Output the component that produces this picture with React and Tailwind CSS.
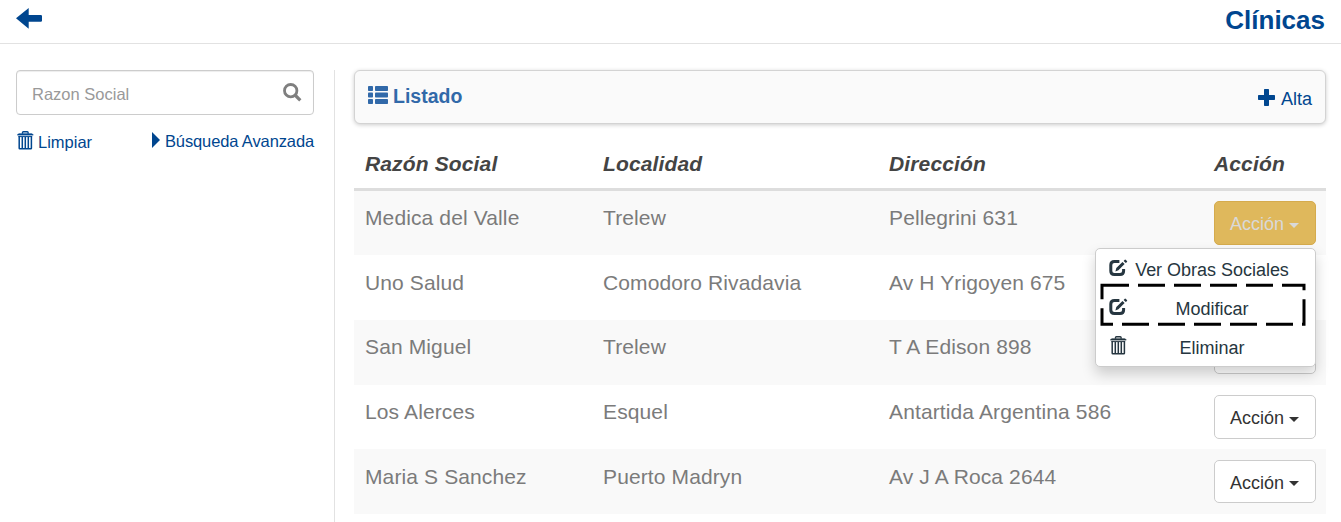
const rows = [
  ["Medica del Valle", "Trelew", "Pellegrini 631"],
  ["Uno Salud", "Comodoro Rivadavia", "Av H Yrigoyen 675"],
  ["San Miguel", "Trelew", "T A Edison 898"],
  ["Los Alerces", "Esquel", "Antartida Argentina 586"],
  ["Maria S Sanchez", "Puerto Madryn", "Av J A Roca 2644"],
];

const GRID = "grid grid-cols-[238px_286px_325px_123px]";

function Trash({ className }) {
  return (
    <svg className={className} width="17" height="19" viewBox="0 0 17 19" fill="none" stroke="currentColor">
      <path d="M5.5 2.8V1.5q0-.8.8-.8h4q.8 0 .8.8v1.3" strokeWidth="1.4" />
      <path d="M.4 4.2V3.4L2 2.6h12.6l1.6.8v.8z" fill="currentColor" strokeWidth=".3" />
      <path d="M2.2 5v12.2q0 .6.6.6h11q.6 0 .6-.6V5" strokeWidth="1.5" />
      <path d="M1.5 5.6h13.6" strokeWidth="1" />
      <path d="M5.3 6v11M8.3 6v11M11.3 6v11" strokeWidth="1.5" />
    </svg>
  );
}

function Edit() {
  return (
    <svg className="mt-px" width="19" height="18" viewBox="0 0 19 18" fill="currentColor">
      <path d="M10.4 2.4H5.4Q1.8 2.4 1.8 6v6q0 3.6 3.6 3.6h5.6q3.6 0 3.6-3.6v-2" fill="none" stroke="currentColor" strokeWidth="3" />
      <path d="M6.4 12.4l.9-3.3 6.2-6.2 2.1 2.1-6.2 6.3zM14.6 1.9l1.2-1.2q.4-.4.8 0l1.4 1.4q.4.4 0 .8l-1.2 1.2z" />
    </svg>
  );
}

function ActionButton({ active }) {
  return (
    <button
      className={
        "flex h-[43.6px] w-[102px] items-center rounded-[5px] border pt-[3px] pl-[15px] text-[18px] leading-none " +
        (active ? "border-[#d5ab4d] bg-[#dfb85c] text-[#d9d9d9]" : "border-[#cccccc] bg-white text-[#333333]")
      }
    >
      Acción
      <svg className="mt-[2px] ml-[5px]" width="10" height="5" viewBox="0 0 10 5" fill="currentColor">
        <path d="M0 0h10L5 5z" />
      </svg>
    </button>
  );
}

function MenuItem({ icon, children }) {
  return (
    <div className="flex h-[39px] items-center">
      <span className="-mt-[6px] flex w-[26px] shrink-0">{icon}</span>
      <span className="w-[154px] text-center tracking-[-0.02px] whitespace-nowrap">{children}</span>
    </div>
  );
}

function ActionMenu() {
  return (
    <div className="absolute top-[47px] right-0 z-10 h-[119px] w-[221px] rounded-[5px] border border-[#cccccc] bg-white pt-[1.6px] pl-[13px] text-[18px] leading-none text-[#263640] shadow-[0_7px_14px_rgba(0,0,0,0.18)]">
      <MenuItem icon={<Edit />}>Ver Obras Sociales</MenuItem>
      <MenuItem icon={<Edit />}>Modificar</MenuItem>
      <MenuItem icon={<Trash className="ml-[1px]" />}>Eliminar</MenuItem>
      <svg className="absolute top-[34px] left-[4px]" width="207" height="44" viewBox="0 0 207 44" fill="none" stroke="#000000" strokeWidth="3">
        <path d="M2 2.2h202v39H2z" strokeDasharray="27 9" />
      </svg>
    </div>
  );
}

export default function App() {
  return (
    <div className="h-[522px] w-[1341px] overflow-hidden bg-white font-['Liberation_Sans',Arial,sans-serif]">
      <header className="flex h-[44px] justify-between border-b border-[#e2e2e2] px-4 text-[#00468f]">
        <svg className="mt-[8px]" width="26" height="21" viewBox="0 0 26 21" fill="currentColor">
          <path d="M0 10.3L12.7 0v7h12.1q1.2 0 1.2 1v4.7q0 1-1.2 1H12.7v7z" />
        </svg>
        <h1 className="pt-[5px] text-[26px] leading-[30px] font-bold">Clínicas</h1>
      </header>
      <div className="flex pt-[26px] pl-4">
        <aside className="h-[460px] w-[319px] shrink-0 border-r border-[#e2e2e2] pr-5 text-[16.5px] text-[#00468f]">
          <div className="flex h-[45px] items-center justify-between rounded-[4px] border border-[#cccccc] pr-[11px] pl-[15px] shadow-[inset_0_1px_1px_rgba(0,0,0,0.075)]">
            <span className="pt-[4px] leading-none text-[#999999]">Razon Social</span>
            <svg className="-mt-px" width="19" height="19" viewBox="0 0 19 19" fill="none" stroke="#7f7f7f">
              <circle cx="7.7" cy="7.7" r="6.2" strokeWidth="2.8" />
              <path d="M12 12l5.3 5.3" strokeWidth="3.2" />
            </svg>
          </div>
          <div className="flex justify-between pt-[16px] leading-[20px]">
            <a className="flex">
              <Trash className="ml-[1px]" />
              <span className="ml-1 pt-[1px]">Limpiar</span>
            </a>
            <a className="flex">
              <svg className="mt-[1px] mr-[5px]" width="8" height="16" viewBox="0 0 8 16" fill="currentColor">
                <path d="M0 0l8 8-8 8z" />
              </svg>
              <span className="tracking-[-0.12px]">Búsqueda Avanzada</span>
            </a>
          </div>
        </aside>
        <main className="ml-[19px] w-[972px] shrink-0">
          <div className="flex h-[54px] justify-between rounded-[6px] border border-[#d3d3d3] bg-[#fafafa] px-[13px] shadow-[0_1px_4px_rgba(0,0,0,0.2)]">
            <div className="flex text-[19.5px] leading-[22px] font-bold text-[#3169a9]">
              <svg className="mt-[15px] mr-[5px]" width="20" height="18" viewBox="0 0 20 18" fill="currentColor">
                <rect width="5" height="5" rx=".8" />
                <rect x="7" width="13" height="5" rx=".8" />
                <rect y="6.5" width="5" height="5" rx=".8" />
                <rect x="7" y="6.5" width="13" height="5" rx=".8" />
                <rect y="13" width="5" height="5" rx=".8" />
                <rect x="7" y="13" width="13" height="5" rx=".8" />
              </svg>
              <span className="pt-[14px]">Listado</span>
            </div>
            <a className="flex text-[18px] leading-[20px] text-[#00468f]">
              <svg className="mt-[18px] mr-[6px]" width="17" height="17" viewBox="0 0 17 17" fill="currentColor">
                <path d="M6.7 0h3.6q.7 0 .7.7V6h5.3q.7 0 .7.7v3.6q0 .7-.7.7H11v5.3q0 .7-.7.7H6.7q-.7 0-.7-.7V11H.7q-.7 0-.7-.7V6.7Q0 6 .7 6H6V.7q0-.7.7-.7z" />
              </svg>
              <span className="pt-[18px]">Alta</span>
            </a>
          </div>
          <div className={GRID + " h-[66.6px] border-b-[3px] border-[#dddddd] pt-[28px] text-[21px] leading-[24px] font-bold tracking-[0.14px] text-[#444444] italic"}>
            <span className="pl-[11px]">Razón Social</span>
            <span className="pl-[11px]">Localidad</span>
            <span className="pl-[11px]">Dirección</span>
            <span className="pl-[11px]">Acción</span>
          </div>
          {rows.map((row, i) => (
            <div key={row[0]} className={GRID + " h-[64.65px] text-[21px] leading-[24px] tracking-[0.12px] text-[#7b7b7b] odd:bg-[#f9f9f9] even:bg-white"}>
              {row.map((cell) => (
                <span key={cell} className="pt-[15.5px] pl-[11px]">{cell}</span>
              ))}
              <div className="relative mt-[10.4px] mr-[10px] ml-[11px] tracking-normal">
                <ActionButton active={i === 0} />
                {i === 0 && <ActionMenu />}
              </div>
            </div>
          ))}
        </main>
      </div>
    </div>
  );
}
